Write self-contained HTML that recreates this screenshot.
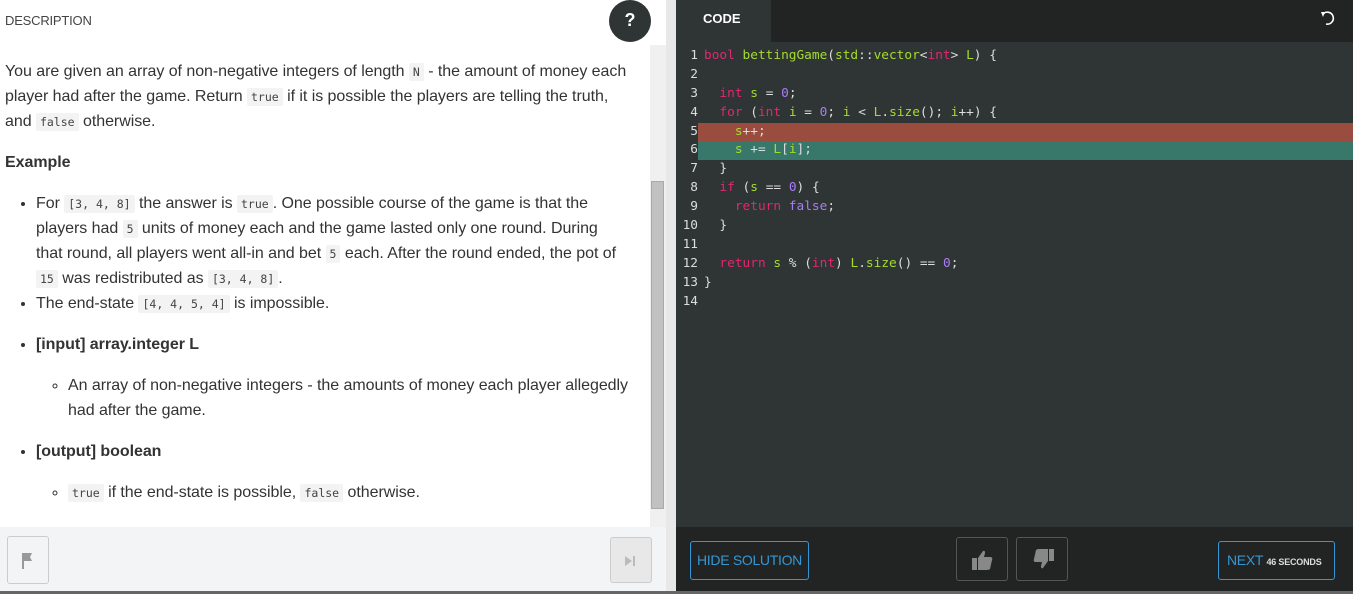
<!DOCTYPE html>
<html><head><meta charset="utf-8"><style>
*{margin:0;padding:0;box-sizing:border-box}
body{width:1353px;height:594px;overflow:hidden;background:#fff;font-family:"Liberation Sans",sans-serif;position:relative}
#left{position:absolute;left:0;top:0;width:666px;height:527px;background:#fff;color:#333}
.hdr{position:absolute;left:5px;top:13px;font-size:13px;color:#444;letter-spacing:-0.2px}
.q{position:absolute;left:609px;top:0;width:42px;height:42px;border-radius:50%;background:#2f3435;color:#fff;font-weight:bold;font-size:18px;text-align:center;line-height:40px}
.sb{position:absolute;left:650px;top:45px;width:16px;height:482px;background:#f0f0f0}
.sb i{position:absolute;left:1px;top:136px;width:13px;height:328px;background:#c1c1c1;border:1px solid #aaa}
.divider{position:absolute;left:666px;top:0;width:10px;height:594px;background:#e8e8e8}
.content{position:absolute;left:5px;top:59px;width:628px;font-size:16px;line-height:25px;letter-spacing:-0.05px}
code{font-family:"DejaVu Sans Mono",monospace;font-size:11.5px;line-height:1;background:#f3f3f3;padding:2px 4px;border-radius:2px;letter-spacing:0;color:#444}
p{margin:0}
h4{font-size:16px;margin:16px 0 16px;font-weight:bold}
ul{margin-left:31px}
ul.in{list-style:circle;margin-left:32px;margin-top:16px}
.bold{font-weight:bold}
#right{position:absolute;left:676px;top:0;width:677px;height:527px;background:#2f3435}
.rhdr{position:absolute;left:0;top:0;width:677px;height:42px;background:#222423}
.tab{position:absolute;left:0;top:0;width:95px;height:42px;background:#2f3435;color:#fff;font-weight:bold;font-size:13px;line-height:38px;padding-left:27px}
.code{position:absolute;left:0;top:47px;width:677px;font-family:"DejaVu Sans Mono",monospace;font-size:12.8px;line-height:18.9px;color:#ddd}
.ln{display:inline-block;width:22px;text-align:right;color:#ddd;margin-right:6px}
.row{height:18.9px;white-space:pre}
.k{color:#e4266f}.g{color:#a5dc2e}.p{color:#a87ef5}
#bl{position:absolute;left:0;top:527px;width:666px;height:64px;background:#f3f4f5}
#br{position:absolute;left:676px;top:527px;width:677px;height:64px;background:#222423}
.btm{position:absolute;left:0;top:591px;width:1353px;height:3px;background:#666}
.btn{position:absolute;border:1px solid #ccc;border-radius:3px;background:#f3f4f5}
.bb{position:absolute;border:1px solid #3497d4;border-radius:3px;color:#3497d4;font-size:14px;line-height:36px;letter-spacing:-0.3px}
.tb{position:absolute;top:10px;width:52px;height:44px;border:1px solid #555;border-radius:3px}
</style></head><body>
<div id="left">
<div class="hdr">DESCRIPTION</div>
<div class="q">?</div>
<div class="sb"><i></i></div>
<div class="content">
<p>You are given an array of non-negative integers of length <code>N</code> - the amount of money each player had after the game. Return <code>true</code> if it is possible the players are telling the truth, and <code>false</code> otherwise.</p>
<h4>Example</h4>
<ul>
<li>For <code>[3, 4, 8]</code> the answer is <code>true</code>. One possible course of the game is that the players had <code>5</code> units of money each and the game lasted only one round. During<br>that round, all players went all-in and bet <code>5</code> each. After the round ended, the pot of<br><code>15</code> was redistributed as <code>[3,&nbsp;4,&nbsp;8]</code>.</li>
<li>The end-state <code>[4, 4, 5, 4]</code> is impossible.</li>
</ul>
<ul style="margin-top:16px">
<li><span class="bold">[input] array.integer L</span>
<ul class="in"><li>An array of non-negative integers - the amounts of money each player allegedly had after the game.</li></ul>
</li>
<li style="margin-top:16px"><span class="bold">[output] boolean</span>
<ul class="in"><li><code>true</code> if the end-state is possible, <code>false</code> otherwise.</li></ul>
</li>
</ul>
</div>
</div>
<div class="divider"></div>
<div id="right">
<div class="rhdr"><div class="tab">CODE</div>
<svg style="position:absolute;left:642px;top:8px" width="20" height="20" viewBox="0 0 20 20"><path d="M5 6 A6 6 0 1 1 8 16" fill="none" stroke="#fff" stroke-width="1.6"/><path d="M3 4 L7 4 L5 9 Z" fill="#fff"/></svg>
</div>
<div class="code">
<div class="row"><span class="ln">1</span><span class="k">bool</span> <span class="g">bettingGame</span>(<span class="g">std</span>::<span class="g">vector</span>&lt;<span class="k">int</span>&gt; <span class="g">L</span>) {</div>
<div class="row"><span class="ln">2</span></div>
<div class="row"><span class="ln">3</span>  <span class="k">int</span> <span class="g">s</span> = <span class="p">0</span>;</div>
<div class="row"><span class="ln">4</span>  <span class="k">for</span> (<span class="k">int</span> <span class="g">i</span> = <span class="p">0</span>; <span class="g">i</span> &lt; <span class="g">L</span>.<span class="g">size</span>(); <span class="g">i</span>++) {</div>
<div class="row" style="background:linear-gradient(90deg,#2f3435 22px,#9a4d3f 22px)"><span class="ln">5</span>    <span class="g">s</span>++;</div>
<div class="row" style="background:linear-gradient(90deg,#2f3435 22px,#37786a 22px)"><span class="ln">6</span>    <span class="g">s</span> += <span class="g">L</span>[<span class="g">i</span>];</div>
<div class="row"><span class="ln">7</span>  }</div>
<div class="row"><span class="ln">8</span>  <span class="k">if</span> (<span class="g">s</span> == <span class="p">0</span>) {</div>
<div class="row"><span class="ln">9</span>    <span class="k">return</span> <span class="p">false</span>;</div>
<div class="row"><span class="ln">10</span>  }</div>
<div class="row"><span class="ln">11</span></div>
<div class="row"><span class="ln">12</span>  <span class="k">return</span> <span class="g">s</span> % (<span class="k">int</span>) <span class="g">L</span>.<span class="g">size</span>() == <span class="p">0</span>;</div>
<div class="row"><span class="ln">13</span>}</div>
<div class="row"><span class="ln">14</span></div>
</div>
</div>
<div id="bl">
<div class="btn" style="left:7px;top:9px;width:42px;height:48px"><svg style="position:absolute;left:13px;top:15px" width="14" height="18"><rect x="1" y="1" width="2" height="16" fill="#999"/><path d="M3 1 H11 L9 5 L11 9 H3Z" fill="#999"/></svg></div>
<div class="btn" style="left:610px;top:10px;width:42px;height:46px;background:#e8e8e8"><svg style="position:absolute;left:13px;top:16px" width="14" height="14"><path d="M1 2 L8 7 L1 12Z" fill="#bbb"/><rect x="9" y="2" width="2" height="10" fill="#bbb"/></svg></div>
</div>
<div id="br">
<div class="bb" style="left:14px;top:14px;width:119px;height:39px;text-align:center">HIDE SOLUTION</div>
<div class="tb" style="left:280px"><svg style="position:absolute;left:14px;top:11px" width="24" height="22"><rect x="1" y="9" width="5" height="12" fill="#888"/><path d="M7 9 L12 2 Q14 1 14 4 L13 8 H20 Q22 9 21 11 L19 20 Q18 21 16 21 H7Z" fill="#888"/></svg></div>
<div class="tb" style="left:340px"><svg style="position:absolute;left:14px;top:10px" width="24" height="22"><rect x="18" y="1" width="5" height="12" fill="#888"/><path d="M17 13 L12 20 Q10 21 10 18 L11 14 H4 Q2 13 3 11 L5 2 Q6 1 8 1 H17Z" fill="#888"/></svg></div>
<div class="bb" style="left:542px;top:14px;width:117px;height:39px;padding-left:8px">NEXT <span style="font-size:9px;font-weight:bold;color:#ddd;letter-spacing:-0.2px">46 SECONDS</span></div>
</div>
<div class="btm"></div>
</body></html>
